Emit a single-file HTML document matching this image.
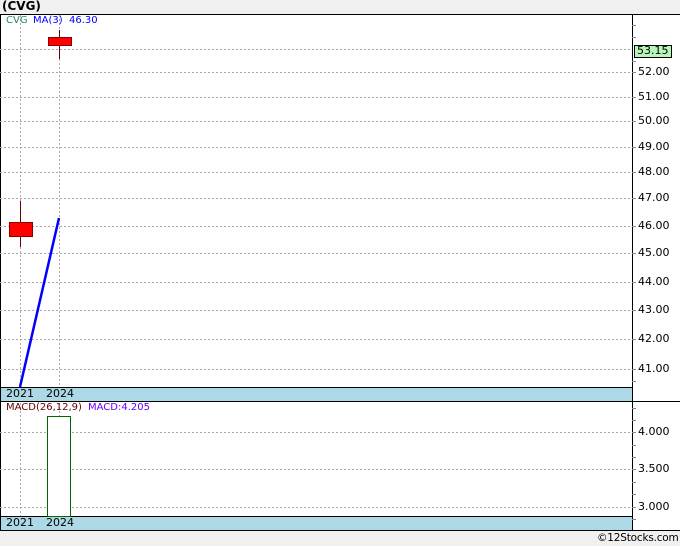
<!DOCTYPE html><html><head><style>
body{margin:0;width:680px;height:546px;background:#f0f0f0;position:relative;overflow:hidden;font-family:"DejaVu Sans",Verdana,sans-serif}
.t{position:absolute;font-size:11px;white-space:nowrap}
</style></head><body>
<div class="t" style="left:2px;top:-1px;font-weight:bold;font-size:12px">(CVG)</div>
<svg width="680" height="546" style="position:absolute;left:0;top:0">
<rect x="0" y="14" width="680" height="517" fill="#fff"/>
<line x1="0" y1="14.5" x2="680" y2="14.5" stroke="#000"/>
<line x1="0.5" y1="14" x2="0.5" y2="531" stroke="#000"/>
<g stroke="#aaa" stroke-dasharray="2,2">
<line x1="0" y1="49.5" x2="632" y2="49.5"/><line x1="0" y1="72.5" x2="632" y2="72.5"/>
<line x1="0" y1="97.5" x2="632" y2="97.5"/><line x1="0" y1="121.5" x2="632" y2="121.5"/>
<line x1="0" y1="147.5" x2="632" y2="147.5"/><line x1="0" y1="172.5" x2="632" y2="172.5"/>
<line x1="0" y1="198.5" x2="632" y2="198.5"/><line x1="0" y1="226.5" x2="632" y2="226.5"/>
<line x1="0" y1="253.5" x2="632" y2="253.5"/><line x1="0" y1="282.5" x2="632" y2="282.5"/>
<line x1="0" y1="310.5" x2="632" y2="310.5"/><line x1="0" y1="339.5" x2="632" y2="339.5"/>
<line x1="0" y1="369.5" x2="632" y2="369.5"/>
<line x1="0" y1="432.5" x2="632" y2="432.5"/><line x1="0" y1="469.5" x2="632" y2="469.5"/><line x1="0" y1="507.5" x2="632" y2="507.5"/>
<line x1="20.5" y1="15" x2="20.5" y2="530"/><line x1="59.5" y1="15" x2="59.5" y2="530"/>
</g>
<rect x="1" y="387" width="631" height="14" fill="#add8e6"/>
<rect x="1" y="516" width="631" height="14" fill="#add8e6"/>
<g stroke="#000"><line x1="0" y1="387.5" x2="632" y2="387.5"/><line x1="0" y1="401.5" x2="680" y2="401.5"/>
<line x1="0" y1="516.5" x2="632" y2="516.5"/><line x1="0" y1="530.5" x2="680" y2="530.5"/>
<line x1="632.5" y1="14" x2="632.5" y2="531"/></g>
<line x1="20.5" y1="201" x2="20.5" y2="247" stroke="#600"/>
<rect x="9.5" y="222.5" width="23" height="14" fill="#f00" stroke="#800"/>
<line x1="59.5" y1="30" x2="59.5" y2="59" stroke="#600"/>
<rect x="48.5" y="37.5" width="23" height="8" fill="#f00" stroke="#800"/>
<line x1="20" y1="387" x2="59" y2="218" stroke="#00f" stroke-width="2.5"/>
<rect x="47.5" y="416.5" width="23" height="100" fill="#fff" stroke="#060"/>
<rect x="634.5" y="45.5" width="37" height="12" fill="#b8f5b8" stroke="#000"/>
<g stroke="#888">
<line x1="632" y1="25.5" x2="636" y2="25.5"/><line x1="632" y1="37.5" x2="636" y2="37.5"/><line x1="632" y1="61.5" x2="636" y2="61.5"/>
<line x1="632" y1="72.5" x2="636" y2="72.5"/><line x1="632" y1="97.5" x2="636" y2="97.5"/><line x1="632" y1="121.5" x2="636" y2="121.5"/>
<line x1="632" y1="147.5" x2="636" y2="147.5"/><line x1="632" y1="172.5" x2="636" y2="172.5"/><line x1="632" y1="198.5" x2="636" y2="198.5"/>
<line x1="632" y1="226.5" x2="636" y2="226.5"/><line x1="632" y1="253.5" x2="636" y2="253.5"/><line x1="632" y1="282.5" x2="636" y2="282.5"/>
<line x1="632" y1="310.5" x2="636" y2="310.5"/><line x1="632" y1="339.5" x2="636" y2="339.5"/><line x1="632" y1="369.5" x2="636" y2="369.5"/>
<line x1="632" y1="381.5" x2="636" y2="381.5"/><line x1="632" y1="408.5" x2="636" y2="408.5"/><line x1="632" y1="420.5" x2="636" y2="420.5"/>
<line x1="632" y1="432.5" x2="636" y2="432.5"/><line x1="632" y1="445.5" x2="636" y2="445.5"/><line x1="632" y1="457.5" x2="636" y2="457.5"/>
<line x1="632" y1="469.5" x2="636" y2="469.5"/><line x1="632" y1="482.5" x2="636" y2="482.5"/><line x1="632" y1="494.5" x2="636" y2="494.5"/>
<line x1="632" y1="507.5" x2="636" y2="507.5"/><line x1="632" y1="519.5" x2="636" y2="519.5"/>
</g>
</svg>
<div class="t" style="left:6px;top:15px;font-size:10px;color:#286">CVG</div>
<div class="t" style="left:33px;top:15px;font-size:10px;color:#00f">MA(3)</div>
<div class="t" style="left:69px;top:15px;font-size:10px;color:#00f">46.30</div>
<div class="t" style="left:6px;top:402px;font-size:10px;color:#600">MACD(26,12,9)</div>
<div class="t" style="left:88px;top:402px;font-size:10px;color:#60f">MACD:4.205</div>
<div class="t" style="left:6px;top:387px">2021</div><div class="t" style="left:46px;top:387px">2024</div>
<div class="t" style="left:6px;top:516px">2021</div><div class="t" style="left:46px;top:516px">2024</div>
<div class="t" style="left:637px;top:44px">53.15</div>
<div class="t" style="left:638px;top:65px">52.00</div><div class="t" style="left:638px;top:90px">51.00</div>
<div class="t" style="left:638px;top:114px">50.00</div><div class="t" style="left:638px;top:140px">49.00</div>
<div class="t" style="left:638px;top:165px">48.00</div><div class="t" style="left:638px;top:191px">47.00</div>
<div class="t" style="left:638px;top:219px">46.00</div><div class="t" style="left:638px;top:246px">45.00</div>
<div class="t" style="left:638px;top:275px">44.00</div><div class="t" style="left:638px;top:303px">43.00</div>
<div class="t" style="left:638px;top:332px">42.00</div><div class="t" style="left:638px;top:362px">41.00</div>
<div class="t" style="left:638px;top:425px">4.000</div><div class="t" style="left:638px;top:462px">3.500</div>
<div class="t" style="left:638px;top:500px">3.000</div>
<div class="t" style="left:597px;top:532px;font-size:10.5px;letter-spacing:-0.2px">©12Stocks.com</div>
</body></html>
